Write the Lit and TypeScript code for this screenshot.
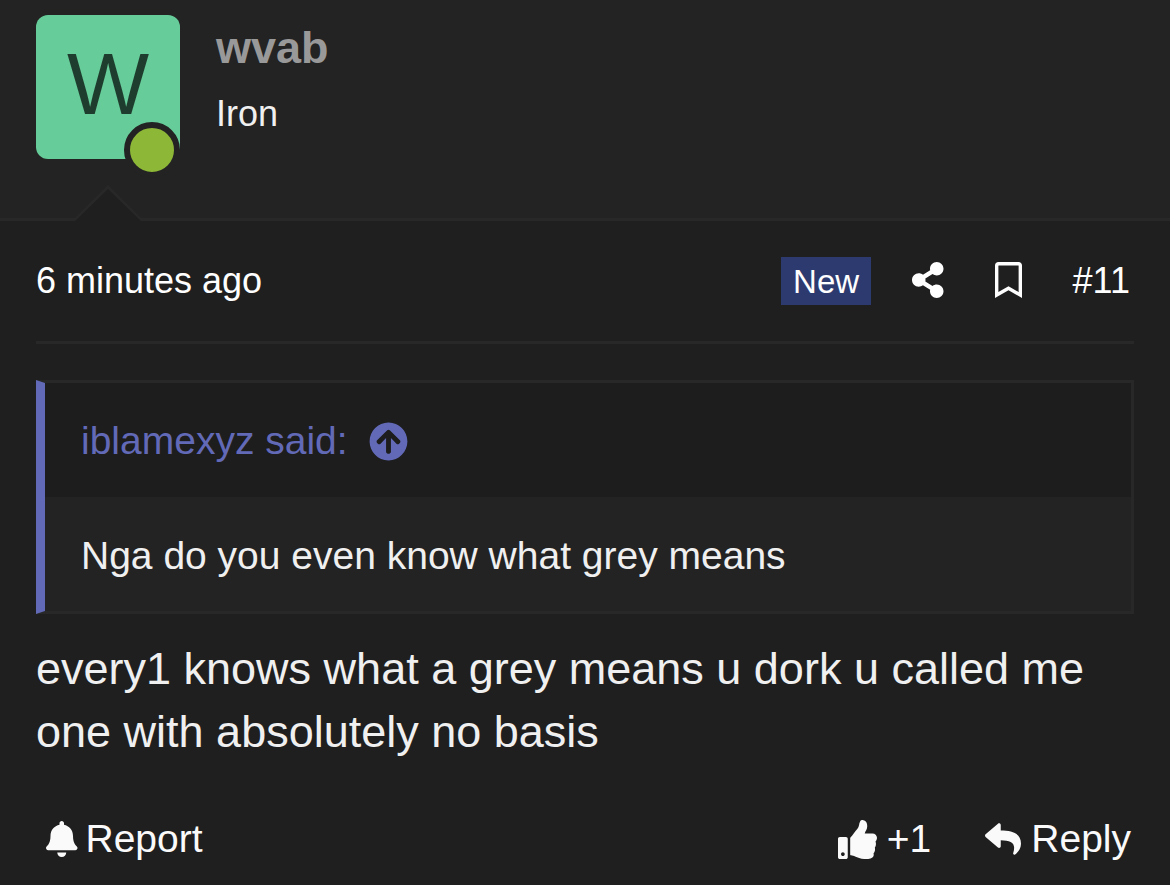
import { LitElement, html, css, svg } from "lit";
import { customElement, property } from "lit/decorators.js";

interface Glyph {
  width: number;
  path: string;
}

const glyphs: Record<string, Glyph> = {
  share: {
    width: 448,
    path: "M352 320c-22.608 0-43.387 7.819-59.79 20.895l-102.486-64.054a96.551 96.551 0 0 0 0-41.683l102.486-64.054C308.613 184.181 329.392 192 352 192c53.019 0 96-42.981 96-96S405.019 0 352 0s-96 42.981-96 96c0 7.158.79 14.13 2.276 20.841L155.79 180.895C139.387 167.819 118.608 160 96 160c-53.019 0-96 42.981-96 96s42.981 96 96 96c22.608 0 43.387-7.819 59.79-20.895l102.486 64.054A96.301 96.301 0 0 0 256 416c0 53.019 42.981 96 96 96s96-42.981 96-96-42.981-96-96-96z",
  },
  bookmark: {
    width: 384,
    path: "M336 0H48C21.49 0 0 21.49 0 48v464l192-112 192 112V48c0-26.51-21.49-48-48-48zm0 428.43l-144-84-144 84V54a6 6 0 0 1 6-6h276c3.314 0 6 2.683 6 5.996V428.43z",
  },
  up: {
    width: 512,
    path: "M8 256C8 119 119 8 256 8s248 111 248 248-111 248-248 248S8 393 8 256zm143.6 28.9l72.4-75.5V392c0 13.3 10.7 24 24 24h16c13.3 0 24-10.7 24-24V209.4l72.4 75.5c9.3 9.7 24.8 9.9 34.3.4l10.9-11c9.4-9.4 9.4-24.6 0-33.9L273 107.7c-9.4-9.4-24.6-9.4-33.9 0L106.3 240.4c-9.4 9.4-9.4 24.6 0 33.9l10.9 11c9.6 9.5 25.1 9.3 34.4-.4z",
  },
  bell: {
    width: 448,
    path: "M224 512c35.32 0 63.97-28.65 63.97-64H160.03c0 35.35 28.65 64 63.97 64zm215.39-149.71c-19.32-20.76-55.47-51.99-55.47-154.29 0-77.7-54.48-139.9-127.94-155.16V32c0-17.67-14.32-32-31.98-32s-31.98 14.33-31.98 32v20.84C118.56 68.1 64.08 130.3 64.08 208c0 102.3-36.15 133.53-55.47 154.29-6 6.45-8.66 14.16-8.61 21.71.11 16.4 12.98 32 32.1 32h383.8c19.12 0 32-15.6 32.1-32 .05-7.55-2.61-15.27-8.61-21.71z",
  },
  like: {
    width: 512,
    path: "M104 224H24c-13.255 0-24 10.745-24 24v240c0 13.255 10.745 24 24 24h80c13.255 0 24-10.745 24-24V248c0-13.255-10.745-24-24-24zM64 472c-13.255 0-24-10.745-24-24s10.745-24 24-24 24 10.745 24 24-10.745 24-24 24zM384 81.452c0 42.416-25.97 66.208-33.277 94.548h101.723c33.397 0 59.397 27.746 59.553 58.098.084 17.938-7.546 37.249-19.439 49.197l-.11.11c9.836 23.337 8.237 56.037-9.308 79.469 8.681 25.895-.069 57.704-16.382 74.757 4.298 17.598 2.244 32.575-6.148 44.632C440.202 511.587 389.616 512 346.839 512l-2.845-.001c-48.287-.017-87.806-17.598-119.56-31.725-15.957-7.099-36.821-15.887-52.651-16.178-6.54-.12-11.783-5.457-11.783-11.998v-213.77c0-3.2 1.282-6.271 3.558-8.521 39.614-39.144 56.648-80.587 89.117-113.111 14.804-14.832 20.188-37.236 25.393-58.902C282.515 39.293 291.817 0 312 0c24 0 72 8 72 81.452z",
  },
  reply: {
    width: 512,
    path: "M8.309 189.836L184.313 37.851C199.719 24.546 224 35.347 224 56.015v80.053c160.629 1.839 288 34.032 288 186.258 0 61.441-39.581 122.309-83.333 154.132-13.653 9.931-33.111-2.533-28.077-18.631 45.344-145.012-21.507-183.51-176.59-185.742V360c0 20.7-24.3 31.453-39.687 18.164l-176.004-152c-11.071-9.562-11.086-26.753 0-36.328z",
  },
};

@customElement("post-icon")
class PostIcon extends LitElement {
  @property() name = "share";

  static styles = css`
    :host {
      display: block;
      flex: none;
      height: 36px;
    }
    :host([large]) {
      height: 39px;
    }
    .glyph {
      display: block;
      height: 100%;
      fill: currentColor;
    }
  `;

  render() {
    const glyph = glyphs[this.name];
    return html`<svg class="glyph" viewBox="0 0 ${glyph.width} 512" aria-hidden="true">
      ${svg`<path d=${glyph.path}></path>`}
    </svg>`;
  }
}

@customElement("app-root")
class AppRoot extends LitElement {
  static styles = css`
    :host {
      display: block;
      min-height: 100vh;
      background: #1f1f1f;
      color: #f0f0f0;
      font-family: "Liberation Sans", Arial, sans-serif;
      font-size: 36px;
      line-height: 50px;
    }
    a {
      color: inherit;
      text-decoration: none;
    }
    button {
      padding: 0;
      border: 0;
      background: none;
      color: inherit;
      font: inherit;
      cursor: pointer;
    }
    .user {
      position: relative;
      display: flex;
      gap: 36px;
      padding: 15px 36px 59px;
      background: #232323;
      border-bottom: 3px solid #282828;
    }
    .avatar {
      position: relative;
      display: block;
      flex: none;
      width: 144px;
      height: 144px;
      border-radius: 12px;
      background: #66cc99;
      color: #1f3d2e;
      font-size: 87px;
      line-height: 138px;
      text-align: center;
    }
    .online {
      position: absolute;
      right: 0;
      bottom: -19px;
      width: 44px;
      height: 44px;
      border: 6px solid #232323;
      border-radius: 50%;
      background: #8db737;
    }
    .notch {
      position: absolute;
      left: 72px;
      bottom: -3px;
      width: 72px;
      height: 36px;
    }
    .name {
      margin: 0;
      color: #999999;
      font-size: 45px;
      line-height: 66px;
      font-weight: 700;
    }
    .rank {
      margin: 8px 0 0;
    }
    .post {
      padding: 0 36px;
    }
    .meta {
      display: flex;
      align-items: center;
      justify-content: space-between;
      height: 120px;
      border-bottom: 3px solid #282828;
      color: #fefefe;
    }
    .tools {
      display: flex;
      align-items: center;
    }
    .new {
      padding: 1px 12px 0;
      margin-right: 41px;
      background: #2d3a70;
      line-height: 47px;
      font-size: 33px;
    }
    .share,
    .save {
      margin-right: 51px;
      padding-bottom: 3px;
    }
    .number {
      padding-right: 4px;
    }
    .quote {
      margin: 36px 0 23px;
      border: 3px solid #282828;
      border-left: 9px solid #626ab8;
      font-size: 39px;
      line-height: 54px;
    }
    .source {
      display: flex;
      align-items: center;
      gap: 21px;
      padding: 31px 36px 29px;
      background: #1d1d1d;
      color: #626ab8;
    }
    .quoted {
      margin: 0;
      padding: 32px 36px 28px;
      background: #232323;
    }
    .message {
      margin: 0;
      font-size: 45px;
      line-height: 63px;
    }
    .actions {
      display: flex;
      align-items: center;
      justify-content: space-between;
      padding: 49px 3px 18px 10px;
      color: #fafafa;
      font-size: 39px;
      line-height: 54px;
    }
    .action {
      display: flex;
      align-items: center;
      gap: 8px;
    }
    .side {
      display: flex;
      gap: 54px;
    }
    .wide {
      gap: 10px;
    }
  `;

  render() {
    return html`
      <article>
        <header class="user">
          <a class="avatar" href="#wvab">W<span class="online"></span></a>
          <div>
            <h4 class="name"><a href="#wvab">wvab</a></h4>
            <p class="rank">Iron</p>
          </div>
          <svg class="notch" viewBox="0 0 72 36" aria-hidden="true">
            <path d="M3 33 36 0 69 33V36H3Z" fill="#282828"></path>
            <path d="M3 36 36 4 69 36Z" fill="#1f1f1f"></path>
          </svg>
        </header>
        <div class="post">
          <div class="meta">
            <a href="#post"><time>6 minutes ago</time></a>
            <div class="tools">
              <span class="new">New</span>
              <a class="share" href="#share" aria-label="Share"><post-icon name="share"></post-icon></a>
              <a class="save" href="#bookmark" aria-label="Bookmark"><post-icon name="bookmark"></post-icon></a>
              <a class="number" href="#post">#11</a>
            </div>
          </div>
          <blockquote class="quote">
            <a class="source" href="#source">iblamexyz said: <post-icon name="up" large></post-icon></a>
            <p class="quoted">Nga do you even know what grey means</p>
          </blockquote>
          <p class="message">every1 knows what a grey means u dork u called me one with absolutely no basis</p>
          <footer class="actions">
            <button class="action"><post-icon name="bell"></post-icon>Report</button>
            <div class="side">
              <button class="action wide"><post-icon name="like" large></post-icon>+1</button>
              <button class="action wide"><post-icon name="reply"></post-icon>Reply</button>
            </div>
          </footer>
        </div>
      </article>
    `;
  }
}
